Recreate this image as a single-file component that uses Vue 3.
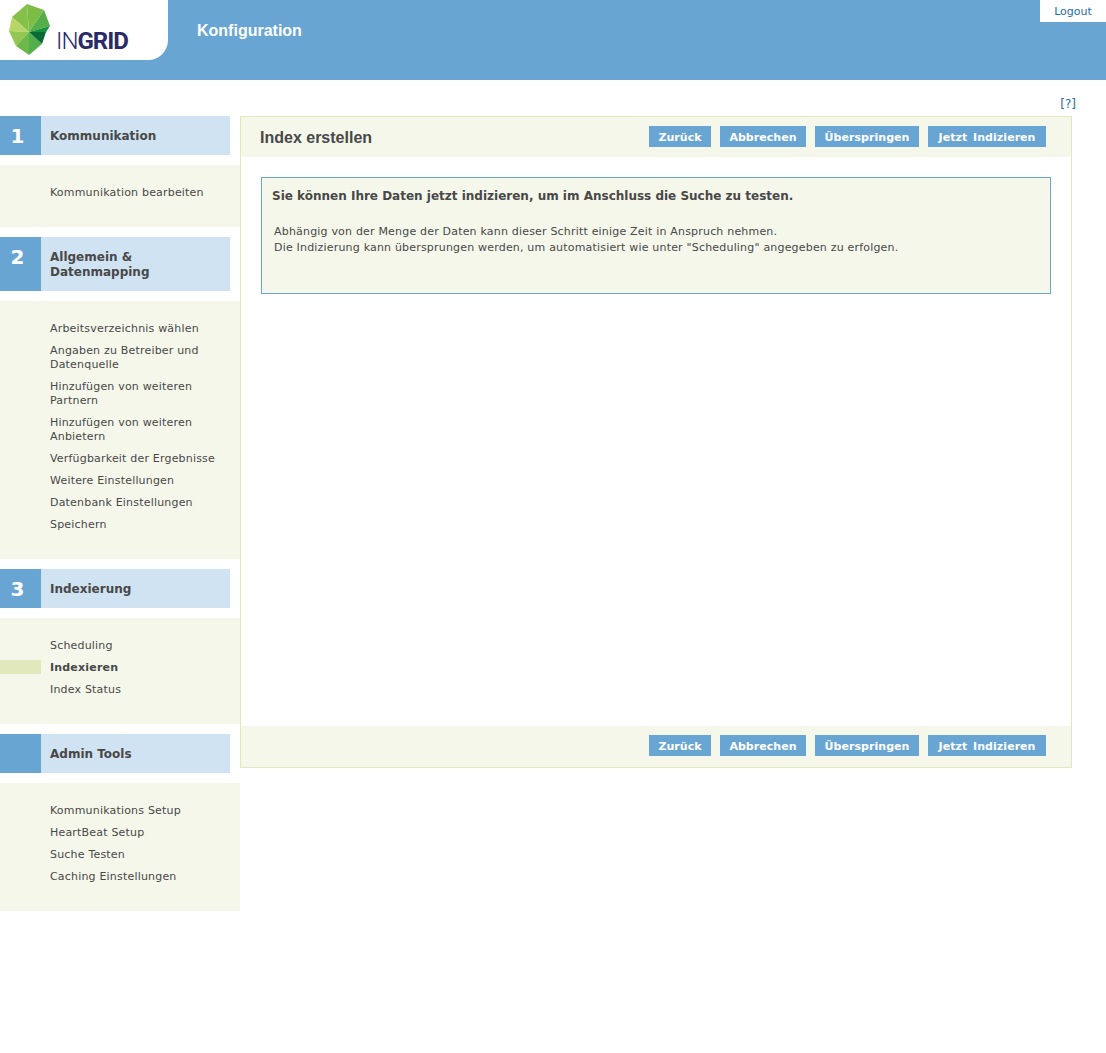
<script setup>
const sections = [
  { num: '1', title: 'Kommunikation', items: ['Kommunikation bearbeiten'] },
  { num: '2', title: 'Allgemein & Datenmapping', items: ['Arbeitsverzeichnis wählen', 'Angaben zu Betreiber und Datenquelle', 'Hinzufügen von weiteren Partnern', 'Hinzufügen von weiteren Anbietern', 'Verfügbarkeit der Ergebnisse', 'Weitere Einstellungen', 'Datenbank Einstellungen', 'Speichern'] },
  { num: '3', title: 'Indexierung', items: ['Scheduling', 'Indexieren', 'Index Status'], active: 'Indexieren' },
  { num: '', title: 'Admin Tools', items: ['Kommunikations Setup', 'HeartBeat Setup', 'Suche Testen', 'Caching Einstellungen'] },
]
const buttons = [
  { label: 'Zurück', width: 62 },
  { label: 'Abbrechen', width: 86 },
  { label: 'Überspringen', width: 104 },
  { label: 'Jetzt Indizieren', width: 118 },
]
</script>

<template>
  <div class="page">
    <header class="top">
      <div class="logo">
        <svg class="mark" width="44" height="52" viewBox="0 0 44 52">
          <polygon points="18,0 35,6 20,28" fill="#7cbd45" />
          <polygon points="18,0 3,13 20,28" fill="#84c04a" />
          <polygon points="35,6 41,22 20,28" fill="#55ae47" />
          <polygon points="3,13 0,27 20,28" fill="#b7d666" />
          <polygon points="0,27 7,42 20,28" fill="#92c752" />
          <polygon points="7,42 20,51 20,28" fill="#6cb84a" />
          <polygon points="20,28 20,51 33,40" fill="#52b04a" />
          <polygon points="20,28 41,22 37,28" fill="#16913f" />
          <polygon points="20,28 37,28 33,40" fill="#0a6b35" />
        </svg>
        <span class="word"><span class="thin">IN</span><b>GRID</b></span>
      </div>
      <h1 class="app">Konfiguration</h1>
      <a class="logout">Logout</a>
    </header>
    <div class="help"><a>[?]</a></div>
    <div class="content">
      <nav class="side">
        <section v-for="s in sections" :key="s.title">
          <div class="head">
            <span class="num">{{ s.num }}</span>
            <span class="title">{{ s.title }}</span>
          </div>
          <ul class="list">
            <li v-for="i in s.items" :key="i" :class="{ on: i === s.active }">{{ i }}</li>
          </ul>
        </section>
      </nav>
      <main class="main">
        <div class="bar">
          <h2>Index erstellen</h2>
          <div class="btns"><button v-for="b in buttons" :key="b.label" :style="{ width: b.width + 'px' }">{{ b.label }}</button></div>
        </div>
        <div class="body">
          <div class="box">
            <h3>Sie können Ihre Daten jetzt indizieren, um im Anschluss die Suche zu testen.</h3>
            <p>Abhängig von der Menge der Daten kann dieser Schritt einige Zeit in Anspruch nehmen.<br>Die Indizierung kann übersprungen werden, um automatisiert wie unter "Scheduling" angegeben zu erfolgen.</p>
          </div>
        </div>
        <div class="bar foot">
          <div class="btns"><button v-for="b in buttons" :key="b.label" :style="{ width: b.width + 'px' }">{{ b.label }}</button></div>
        </div>
      </main>
    </div>
  </div>
</template>

<style>
html, body { margin: 0; background: #fff; }
</style>

<style scoped>
.page { height: 1053px; font-family: "DejaVu Sans", Verdana, sans-serif; font-size: 11px; color: #484848; overflow: hidden; }
.top { height: 80px; background: #69a5d3; display: flex; align-items: flex-start; position: relative; }
.logo { width: 168px; height: 60px; background: #fff; border-bottom-right-radius: 20px; display: flex; position: relative; }
.mark { margin: 4px 0 0 9px; flex: none; }
.word { font-family: Roboto, sans-serif; font-size: 24px; line-height: 24px; color: #2b2a68; margin: 29px 0 0 3px; letter-spacing: -1px; white-space: nowrap; }
.thin { font-weight: 300; }
.word b { font-weight: 700; }
.app { margin: 22px 0 0 29px; font: bold 16px/18px "Liberation Sans", Arial, sans-serif; color: #fff; }
.logout { position: absolute; right: 0; top: 0; width: 66px; height: 22px; background: #fff; color: #1f6ea6; text-align: center; line-height: 24px; }
.help { height: 36px; box-sizing: border-box; padding: 17px 30px 0 0; text-align: right; line-height: 14px; font-size: 12px; color: #1f6ea6; }
.content { display: flex; align-items: flex-start; }
.side { width: 240px; flex: none; }
.head { width: 230px; display: flex; background: #d0e3f2; align-items: stretch; }
.num { width: 35px; padding: 1px 6px 0 0; flex: none; background: #69a5d3; color: #fff; font-size: 20px; font-weight: bold; text-align: center; line-height: 38px; }
.title { padding: 13px 9px 11px; font-size: 12px; font-weight: bold; line-height: 15px; flex: 1; }
.list { list-style: none; margin: 10px 0; padding: 20px 20px 20px 0; background: #f5f7eb; }
.list li { padding: 1px 0 0 50px; line-height: 14px; margin-bottom: 7px; position: relative; letter-spacing: 0.19px; }
.list li.on { font-weight: bold; }
.list li.on::before { content: ""; position: absolute; left: 0; top: 0; width: 41px; height: 14px; background: #e0e8bc; }
.main { width: 832px; height: 652px; box-sizing: border-box; border: 1px solid #e0e8bc; display: flex; flex-direction: column; }
.bar { height: 40px; flex: none; background: #f5f7eb; display: flex; align-items: flex-start; justify-content: space-between; padding: 0 25px 0 19px; }
.foot { height: 41px; justify-content: flex-end; }
h2 { margin: 12px 0 0; font: bold 16px/18px "Liberation Sans", Arial, sans-serif; color: #484848; }
.btns { display: flex; gap: 9px; margin-top: 9px; }
button { height: 21px; border: 0; padding: 1px 0 0; background: #69a5d3; color: #fff; font: bold 11px "DejaVu Sans", Verdana, sans-serif; letter-spacing: 0.05px; word-spacing: 2px; }
.body { flex: 1; padding: 20px 20px 0; }
.box { height: 117px; width: 790px; box-sizing: border-box; border: 1px solid #69a5d3; background: #f5f7eb; padding: 10px; }
h3 { margin: 0 0 20px; font-size: 12px; font-weight: bold; line-height: 16px; }
p { margin: 0 0 0 2px; line-height: 16px; letter-spacing: 0.19px; }
</style>
